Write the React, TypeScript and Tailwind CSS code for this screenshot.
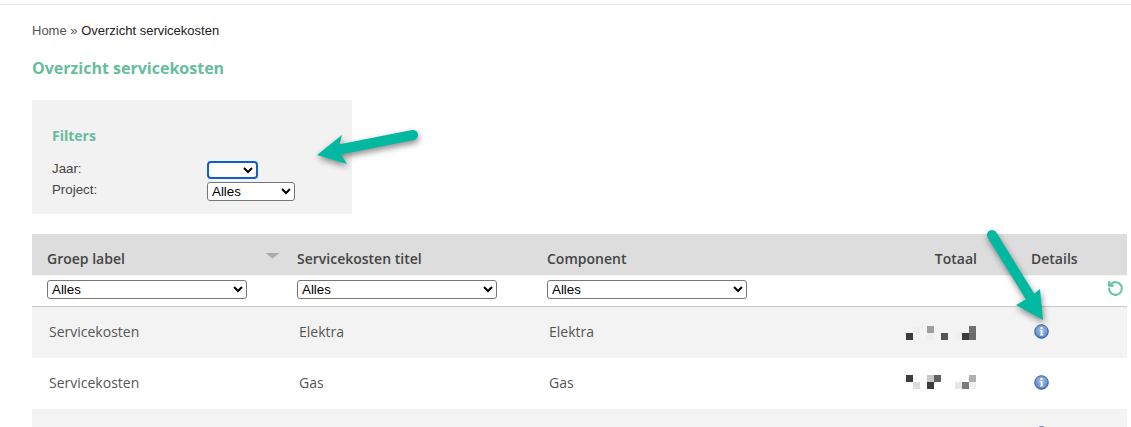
const rows = [
  {
    group: 'Servicekosten',
    title: 'Elektra',
    component: 'Elektra',
    bg: 'bg-[#f3f3f3]',
    mosaicTop: 'pt-[19px]',
    blocks: [
      [22, 7, '#3c3c3c'],
      [29, 0, '#eeeeee'],
      [43, 0, '#9e9e9e'],
      [43, 7, '#eeeeee'],
      [57, 7, '#555555'],
      [71, 7, '#f0f0f0'],
      [78, 7, '#3c3c3c'],
      [85, 0, '#707070'],
      [85, 7, '#6a6a6a'],
    ],
  },
  {
    group: 'Servicekosten',
    title: 'Gas',
    component: 'Gas',
    bg: 'bg-white',
    mosaicTop: 'pt-[17px]',
    blocks: [
      [22, 0, '#3c3c3c'],
      [29, 7, '#dddddd'],
      [43, 0, '#c8c8c8'],
      [50, 0, '#606060'],
      [43, 7, '#3c3c3c'],
      [71, 7, '#e8e8e8'],
      [78, 7, '#7a7a7a'],
      [85, 0, '#b0b0b0'],
      [85, 7, '#f0f0f0'],
    ],
  },
  { group: '', title: '', component: '', bg: 'bg-[#f3f3f3]', mosaicTop: 'pt-[17px]', blocks: [] },
] as const;

const columns = 'grid grid-cols-[250px_250px_250px_180px_1fr]';

const InfoIcon = () => (
  <svg width="15" height="15" viewBox="0 0 15 15">
    <defs>
      <radialGradient id="infoFill" cx="50%" cy="40%" r="60%">
        <stop offset="0%" stopColor="#a9c4e6" />
        <stop offset="70%" stopColor="#6f97cf" />
        <stop offset="100%" stopColor="#3f6bab" />
      </radialGradient>
    </defs>
    <circle cx="7.5" cy="7.5" r="6.8" fill="url(#infoFill)" stroke="#3b65a4" strokeWidth="1" />
    <rect x="6.5" y="3" width="2" height="2" fill="#fff" />
    <path d="M5.8 6.2h2.7v4.2h1v1H5.8v-1h1V7.2h-1z" fill="#fff" />
  </svg>
);

const Mosaic = ({ blocks }: { blocks: readonly (readonly [number, number, string])[] }) => (
  <svg width="120" height="14" viewBox="0 0 120 14" className="ml-auto mr-[-25px]">
    {blocks.map(([x, y, fill], i) => (
      <rect key={i} x={x} y={y} width="7" height="7" fill={fill} />
    ))}
  </svg>
);

const Select = ({ className, label }: { className: string; label?: string }) => (
  <select className={`block bg-white text-[13.33px] text-black font-['Liberation_Sans',sans-serif] ${className}`}>
    <option>{label}</option>
  </select>
);

const Arrows = () => (
  <svg width="1131" height="427" viewBox="0 0 1131 427" className="absolute top-0 left-0 pointer-events-none drop-shadow-[1px_3px_3px_rgba(0,0,0,0.45)]">
    <path d="M413 135L337 150" stroke="#00b9a0" strokeWidth="10" strokeLinecap="round" fill="none" />
    <path d="M317 155L342 135L338 150L347 164Z" fill="#00b9a0" />
    <path d="M992 235L1031 298" stroke="#00b9a0" strokeWidth="10" strokeLinecap="round" fill="none" />
    <path d="M1043 320L1040 289L1030 297L1016 305Z" fill="#00b9a0" />
  </svg>
);

export default function App() {
  return (
    <div className="relative h-[427px] overflow-hidden bg-white font-['Open_Sans',sans-serif] text-[#444]">
      <div className="h-[5px] border-b border-[#e6e6e6]" />

      <div className="pl-[32px] pr-[4px]">
        <div className="pt-[18px] h-[33px] text-[13px] leading-[15px] font-['Liberation_Sans',sans-serif] text-[#555]">
          Home » <span className="text-[#222]">Overzicht servicekosten</span>
        </div>

        <h1 className="mt-[19px] text-[16px] leading-[22px] font-bold text-[#66bd9b]">Overzicht servicekosten</h1>

        <div className="mt-[21px] w-[320px] h-[114px] bg-[#f2f2f2] pl-[20px] pt-[26px]">
          <h2 className="text-[14px] leading-[19px] font-bold text-[#66bd9b]">Filters</h2>
          <div className="mt-[16px] grid grid-cols-[155px_1fr] gap-y-[3px] text-[13.3px] leading-[15px] font-['Liberation_Sans',sans-serif]">
            <span className="h-[18px]">Jaar:</span>
            <Select className="w-[51px] h-[18px] border-2 border-[#0f5fc9] rounded-[4px]" />
            <span className="h-[19px]">Project:</span>
            <Select className="w-[88px] h-[19px] border border-[#767676] rounded-[3px]" label="Alles" />
          </div>
        </div>

        <div className="mt-[20px]">
          <div className={`${columns} h-[41px] items-center bg-[#dddddd] pl-[15px] text-[14px] font-semibold text-[#444]`}>
            <div className="flex items-center justify-between pr-[17px] pt-[7px]">
              <span>Groep label</span>
              <span className="w-[15px] h-[6px] mb-[5px] bg-[#aaaaaa] [clip-path:polygon(0_0,100%_0,50%_100%)]" />
            </div>
            <div className="pt-[7px]">Servicekosten titel</div>
            <div className="pt-[7px]">Component</div>
            <div className="pt-[7px] text-right">Totaal</div>
            <div className="pt-[7px] pl-[54px]">Details</div>
          </div>

          <div className={`${columns} h-[32px] items-start pt-[4px] pl-[15px] border-b border-[#c8c8c8] border-t border-t-[#f5f5f5]`}>
            <Select className="w-[200px] h-[19px] border border-[#767676] rounded-[3px]" label="Alles" />
            <Select className="w-[200px] h-[19px] border border-[#767676] rounded-[3px]" label="Alles" />
            <Select className="w-[200px] h-[19px] border border-[#767676] rounded-[3px]" label="Alles" />
            <div />
            <div className="flex justify-end pr-[3px] text-[#6cc3a0]">
              <svg width="17" height="17" viewBox="0 0 24 24" fill="none" stroke="currentColor" strokeWidth="3" strokeLinecap="round" strokeLinejoin="round">
                <path d="M3 12a9 9 0 1 0 3-6.7L3 8" />
                <path d="M3 2.5V8h5.5" />
              </svg>
            </div>
          </div>

          {rows.map((row, i) => (
            <div key={i} className={`${columns} h-[51px] items-center pl-[17px] text-[14px] text-[#555] ${row.bg}`}>
              <div className="mb-[2px]">{row.group}</div>
              <div className="mb-[2px]">{row.title}</div>
              <div className="mb-[2px]">{row.component}</div>
              <div className={`flex self-start ${row.mosaicTop}`}>
                <Mosaic blocks={row.blocks} />
              </div>
              <div className="pl-[55px] mb-[2px]">
                <InfoIcon />
              </div>
            </div>
          ))}
        </div>
      </div>

      <Arrows />
    </div>
  );
}
